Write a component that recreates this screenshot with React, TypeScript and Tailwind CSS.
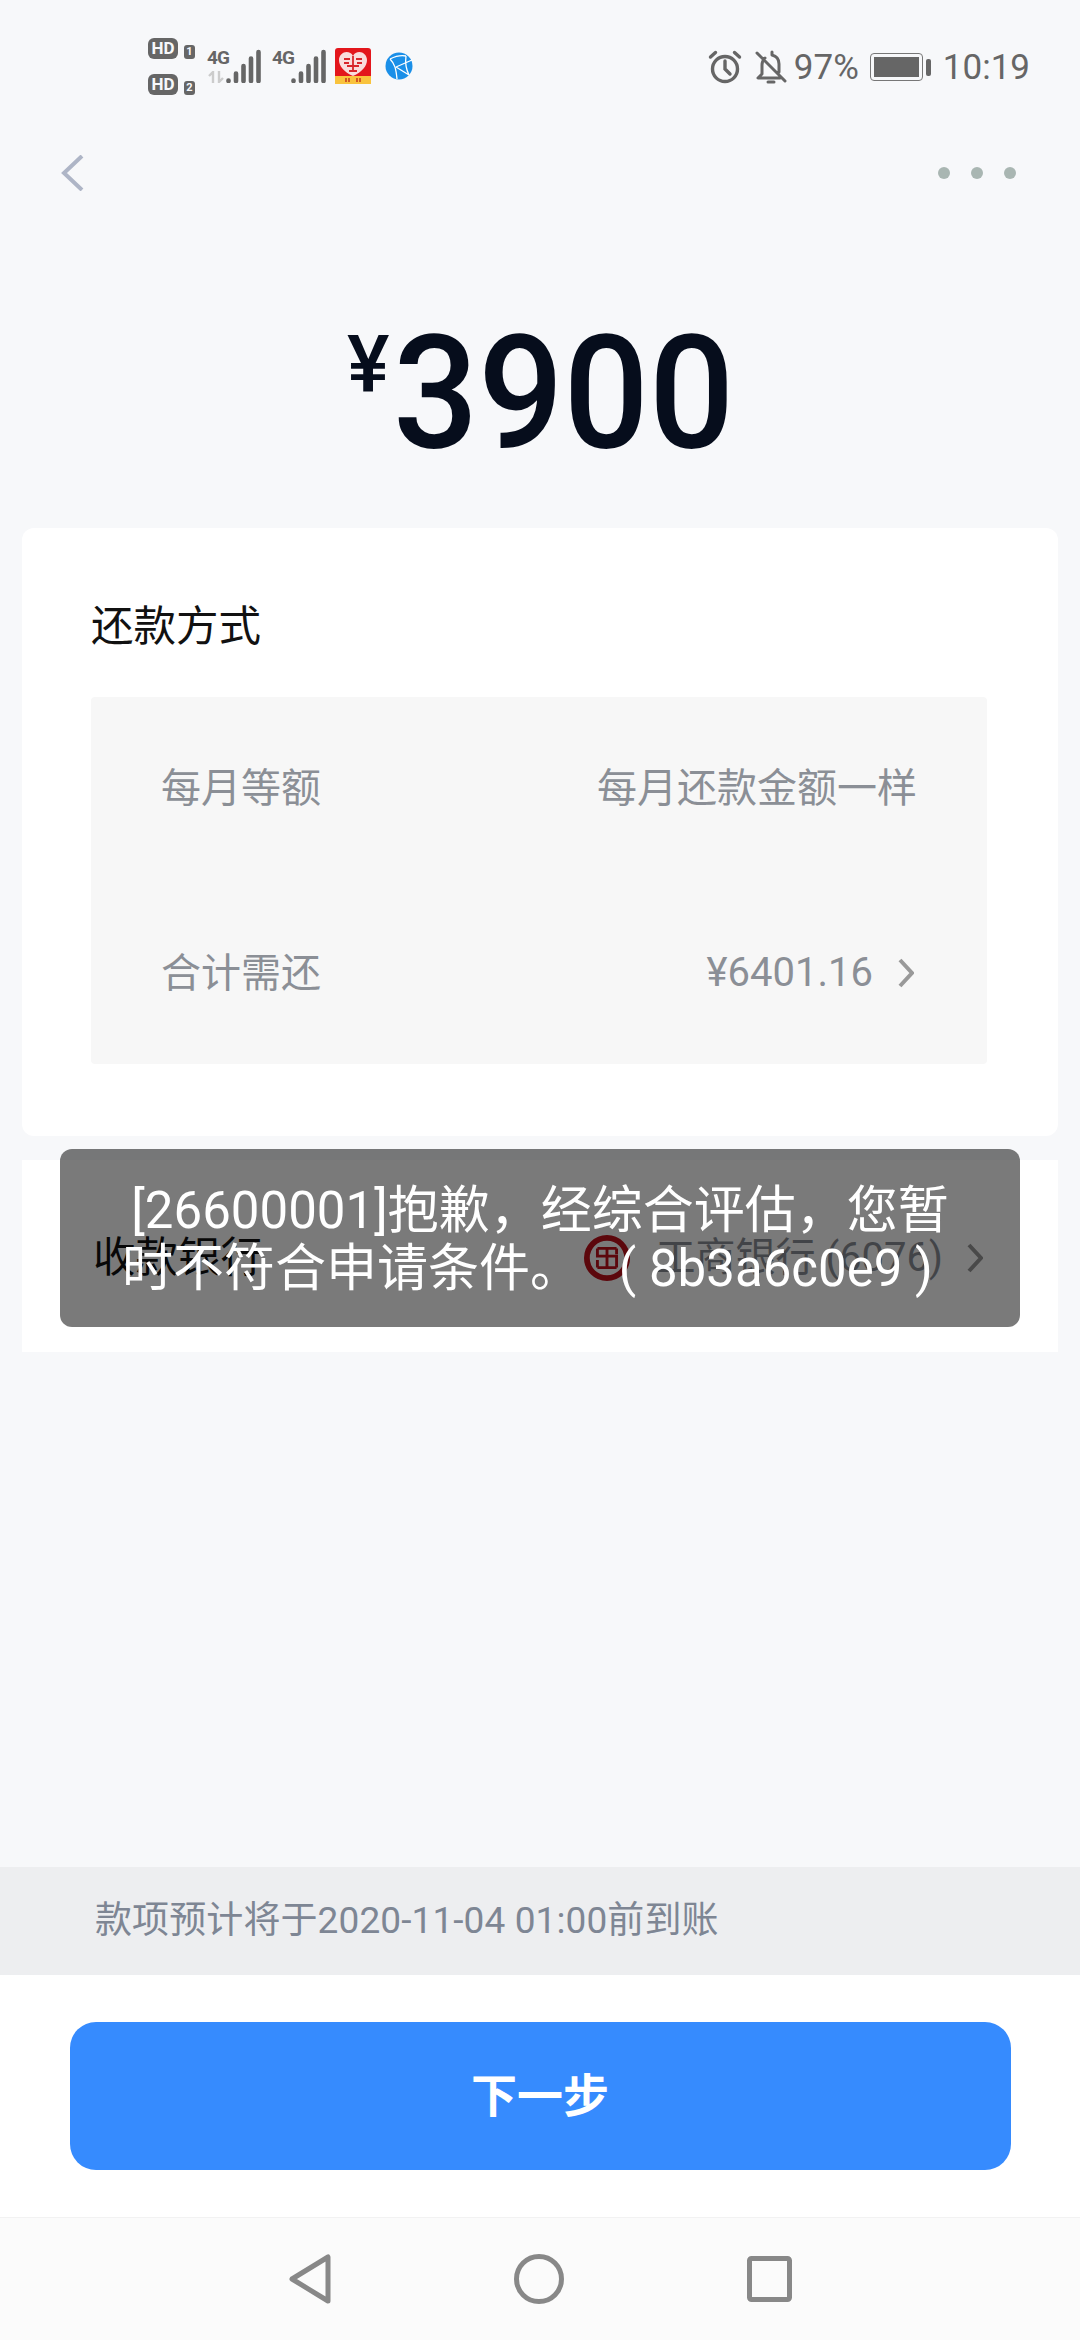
const cjk = 'font-["Roboto","Noto_Sans_CJK_SC",sans-serif]'

function Chevron() {
  return (
    <svg width="16" height="30" viewBox="0 0 16 30" fill="none" stroke="#999" strokeWidth="4">
      <path d="M2 2l12 13L2 28" />
    </svg>
  )
}

function Signal({ dim }: { dim?: boolean }) {
  return (
    <div className="relative h-[34px] w-[55px]">
      <span className="absolute left-0 top-0 text-[19px] leading-[17px] font-bold tracking-[-1px] text-[#666]">4G</span>
      {dim && (
        <svg width="18" height="12" viewBox="0 0 18 12" className="absolute bottom-0 left-0" fill="none" stroke="#ccc" strokeWidth="2.4">
          <path d="M2 5l4-4v11M16 7l-4 4V0" />
        </svg>
      )}
      <svg width="55" height="34" viewBox="0 0 55 34" className="absolute left-0 top-0">
        <path
          d="M21.5 31.5v.5M29 24.5v7.5M36.5 17v15M44 9.5v22.5M51.5 3v29"
          stroke="#666"
          strokeWidth="4.6"
          strokeLinecap="round"
        />
      </svg>
    </div>
  )
}

function HdBadge({ n }: { n: string }) {
  return (
    <div className="flex items-end gap-[6px]">
      <span className="w-[30px] rounded-[6px] bg-[#666] text-center text-[17px] leading-[21px] font-bold text-[#f7f8fa]">HD</span>
      <span className="w-[11px] rounded-[3px] bg-[#666] text-center text-[11px] leading-[14px] font-bold text-[#f7f8fa]">{n}</span>
    </div>
  )
}

function StatusBar() {
  return (
    <div className="flex h-[130px] items-center justify-between pl-[148px] pr-[50px] pt-[2px]">
      <div className="flex items-center">
        <div className="flex flex-col gap-[15px]">
          <HdBadge n="1" />
          <HdBadge n="2" />
        </div>
        <div className="ml-[12px]"><Signal dim /></div>
        <div className="ml-[10px]"><Signal /></div>
        {/* shopping app notification logo */}
        <svg width="36" height="36" viewBox="0 0 36 36" className="ml-[8px]">
          <rect width="36" height="36" rx="3" fill="#e3161c" />
          <rect y="28" width="36" height="8" fill="#f9c33d" />
          <path d="M18 28C9 24 4 18 4 12c0-5 4-8 7.500-8 3 0 5 1 6.500 4 1.500-3 3.500-4 6.500-4C28 4 32 7 32 12c0 6-5 12-14 16z" fill="#f9dcdc" />
          <path d="M9 11h6M21 11h6M12 18h12M18 8v14M14 23h8M9 15h5M22 15h5" stroke="#d8262b" strokeWidth="1.8" />
          <path d="M11 30v4M14 30v4M22 30v4M25 30v4" stroke="#c8401e" strokeWidth="1.6" />
        </svg>
        <svg width="28" height="28" viewBox="0 0 28 28" className="ml-[14px]">
          <circle cx="14" cy="14" r="13.500" fill="#1a8fe8" />
          <path d="M5 7c5 5 6 10 7 20M5 7c6-3 11-4 16-3M11 15l16-7M21 4c-1 7 0 13 3 19M11 15l13 8" stroke="#fff" strokeWidth="1.300" fill="none" />
        </svg>
      </div>
      <div className="mt-[2px] flex items-center font-['Roboto',sans-serif] text-[35px] leading-none text-[#666]">
        <svg width="34" height="34" viewBox="0 0 34 34" fill="none" stroke="#666" strokeWidth="3.400" strokeLinecap="round">
          <circle cx="17" cy="19" r="12.500" />
          <path d="M17 11v8l5 5M2.500 7l5-4.500M31.500 7l-5-4.500" />
        </svg>
        <svg width="32" height="34" viewBox="0 0 32 34" fill="none" stroke="#666" strokeWidth="3" strokeLinecap="round" strokeLinejoin="round" className="ml-[13px]">
          <path d="M2 3l28 28M24 22v-8c0-5-3-8-7-9V2M10 8c-2 2-3 4-3 7v9l-4 4h22M13 32h6" />
        </svg>
        <span className="ml-[7px]">97%</span>
        <div className="ml-[11px] flex items-center">
          <div className="h-[28px] w-[53px] rounded-[4px] border-[1.5px] border-[#777] p-[3px]">
            <div className="h-full w-full bg-[#666]" />
          </div>
          <div className="ml-[3px] h-[17px] w-[5px] rounded-[2px] bg-[#666]" />
        </div>
        <span className="ml-[12px]">10:19</span>
      </div>
    </div>
  )
}

function Header() {
  return (
    <div className="flex h-[86px] items-center justify-between pl-[60px] pr-[64px]">
      <svg width="24" height="36" viewBox="0 0 24 36" fill="none" stroke="#aeb5c6" strokeWidth="4">
        <path d="M22 1L4 18l18 17" />
      </svg>
      <div className="flex items-center gap-[21px]">
        <span className="h-[12px] w-[12px] rounded-full bg-[#a9b6b2]" />
        <span className="h-[12px] w-[12px] rounded-full bg-[#a9b6b2]" />
        <span className="h-[12px] w-[12px] rounded-full bg-[#a9b6b2]" />
      </div>
    </div>
  )
}

export default function App() {
  return (
    <div className={`relative flex h-[2340px] w-[1080px] flex-col overflow-hidden bg-[#f7f8fa] ${cjk}`}>
      <StatusBar />
      <Header />

      {/* amount */}
      <div className="flex h-[312px] items-start justify-center gap-[2px] pt-[119px] font-['Roboto',sans-serif] font-medium text-[#060d1c]">
        <span className="w-[44px] text-[80px] leading-[60px]">¥</span>
        <span className="w-[340px] origin-left scale-x-[.95] text-[158px] leading-[116px]">3900</span>
      </div>

      {/* repayment card */}
      <div className="mx-[22px] h-[608px] rounded-[12px] bg-white pl-[69px] pr-[71px] pt-[72px]">
        <div className="text-[42.5px] leading-[54px] text-[#111]">还款方式</div>
        <div className="mt-[43px] flex h-[367px] flex-col justify-between rounded-[4px] bg-[#f7f7f7] px-[70px] pb-[63px] pt-[65px] text-[40px] leading-[54px] text-[#8b8f96]">
          <div className="flex justify-between">
            <span>每月等额</span>
            <span>每月还款金额一样</span>
          </div>
          <div className="flex items-center justify-between">
            <span>合计需还</span>
            <span className="flex items-center">
              <span className="mt-[-2px]">¥6401.16</span>
              <span className="ml-[25px] mr-[3px] mt-[-2px]"><Chevron /></span>
            </span>
          </div>
        </div>
      </div>

      {/* bank row, mostly covered by the toast */}
      <div className="mx-[22px] mt-[24px] flex h-[192px] items-start justify-between bg-white pl-[71px] pr-[75px] pt-[71px]">
        <span className="text-[42.5px] leading-[54px] text-[#111]">收款银行</span>
        <div className="flex items-center text-[40px] leading-[54px] text-[#8b8f96]">
          <svg width="46" height="46" viewBox="0 0 48 48" className="mr-[26px]" fill="none" stroke="#c00f1a">
            <circle cx="24" cy="24" r="21" strokeWidth="6" />
            <path d="M14 14h20M14 34h20M14 14v8h20v12M34 14v6M14 26v8M24 14v20" strokeWidth="3" />
          </svg>
          <span>工商银行 (6076)</span>
          <span className="ml-[24px]"><Chevron /></span>
        </div>
      </div>

      <div className="flex-1" />

      <div className="flex h-[108px] items-center bg-[#edeef0] pl-[95px] text-[37px] tracking-[0.1px] text-[#7e8694]">
        款项预计将于2020-11-04 01:00前到账
      </div>
      <div className="flex h-[242px] items-start justify-center bg-white pt-[47px]">
        <div className="flex h-[148px] w-[941px] items-center justify-center rounded-[26px] bg-[#368bfe] text-[46px] font-bold text-white">
          下一步
        </div>
      </div>

      {/* android nav bar */}
      <div className="flex h-[123px] items-center justify-center gap-[183px] border-t border-[#f2f2f2] bg-[#fbfbfb]">
        <svg width="42" height="50" viewBox="0 0 42 50" fill="none" stroke="#888" strokeWidth="5" strokeLinejoin="round">
          <path d="M39 3v44L3 25z" />
        </svg>
        <svg width="50" height="50" viewBox="0 0 50 50" fill="none" stroke="#888" strokeWidth="5">
          <circle cx="25" cy="25" r="22.500" />
        </svg>
        <svg width="45" height="46" viewBox="0 0 45 46" fill="none" stroke="#888" strokeWidth="5" strokeLinejoin="round">
          <rect x="2.500" y="2.500" width="40" height="41" rx="2" />
        </svg>
      </div>

      {/* toast */}
      <div className="absolute left-[60px] top-[1149px] flex h-[178px] w-[960px] items-center justify-center rounded-[12px] bg-black/52 px-[55px] pt-[4px] text-center text-[51px] leading-[58px] text-white">
        {'[26600001]抱歉，经综合评估，您暂时不符合申请条件。\u00a0\u00a0 ( 8b3a6c0e9 )\u00a0\u00a0'}
      </div>
    </div>
  )
}
